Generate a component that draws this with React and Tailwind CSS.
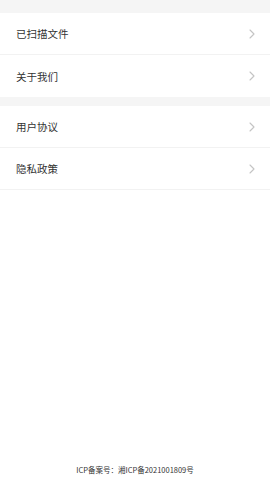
import React from 'react'

const font = { fontFamily: '"Noto Sans CJK SC", "Noto Sans", sans-serif' }

const Chevron = () => (
  <svg width="6" height="10" viewBox="0 0 6 10" fill="none">
    <path d="M1 1l4 4-4 4" stroke="#c4c4c4" strokeWidth="1.1" strokeLinecap="round" strokeLinejoin="round" />
  </svg>
)

const Row = ({ label, last }) => (
  <div className={`h-[42px] flex items-center justify-between pl-4 pr-[15px] bg-white ${last ? '' : 'border-b border-[#f2f2f2]'}`}>
    <span className="text-[10.5px] text-[#333] pt-px">{label}</span>
    <Chevron />
  </div>
)

export default function App() {
  return (
    <div className="w-[270px] h-[480px] bg-white flex flex-col" style={font}>
      <div className="h-[13px] bg-[#f5f5f5]" />
      <Row label="已扫描文件" />
      <Row label="关于我们" last />
      <div className="h-[9px] bg-[#f5f5f5]" />
      <Row label="用户协议" />
      <Row label="隐私政策" />
      <div className="flex-1" />
      <div className="h-[14px] flex items-start justify-center">
        <span className="text-[7.5px] leading-none text-[#333]">ICP备案号：湘ICP备2021001809号</span>
      </div>
    </div>
  )
}
